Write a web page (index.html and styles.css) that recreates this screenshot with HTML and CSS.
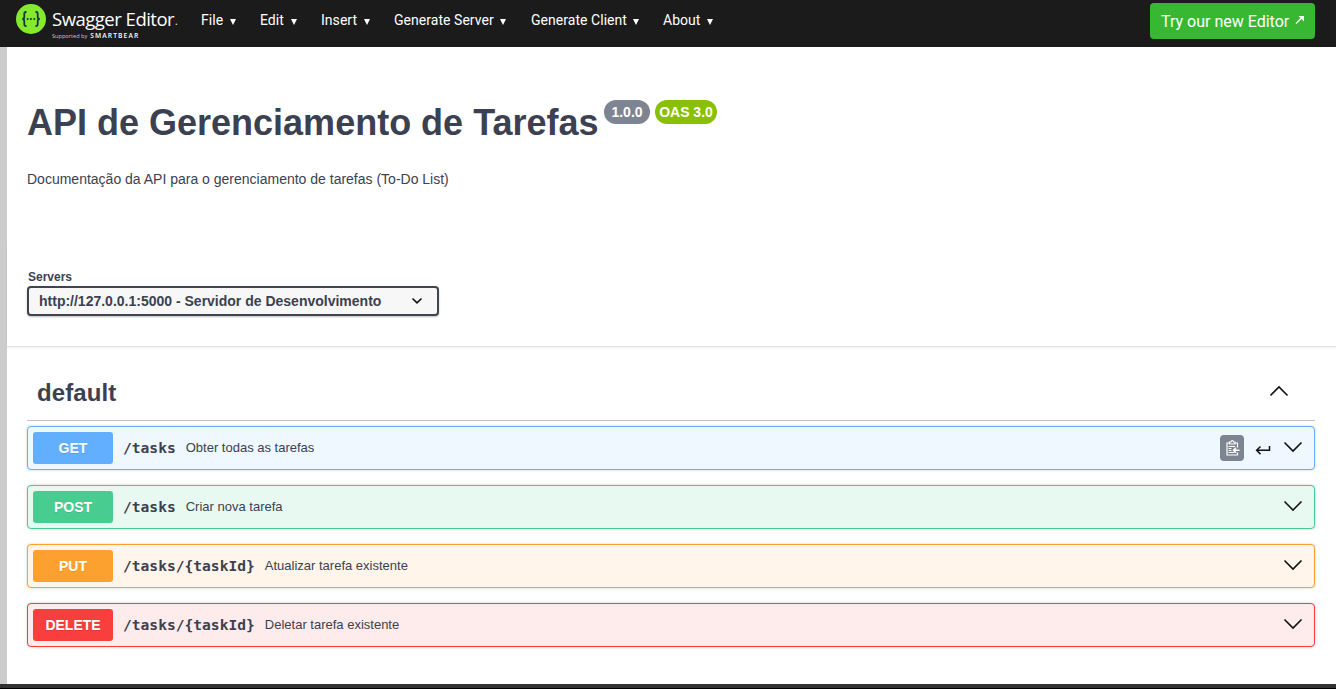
FILE: index.html
```
<!DOCTYPE html>
<html lang="pt">
<head>
<meta charset="utf-8">
<title>Swagger Editor</title>
<link rel="stylesheet" href="styles.css">
</head>
<body>
<header class="topbar">
  <div class="logo">
    <svg class="logo-mark" viewBox="0 0 30 30" width="30" height="30"><circle cx="15" cy="15" r="15" fill="#85ea2d"/><g fill="none" stroke="#173647" stroke-width="1.800"><path d="M10.500 8H9.800Q8.300 8 8.300 9.500v3.200Q8.300 15 6.200 15q2.100 0 2.100 2.300V20.500q0 1.500 1.500 1.500h.7M19.500 8h.7q1.500 0 1.500 1.500v3.200Q21.700 15 23.800 15q-2.100 0-2.100 2.300V20.500q0 1.500-1.500 1.500h-.7"/></g><g fill="#173647"><circle cx="11.700" cy="15" r="1.050"/><circle cx="15" cy="15" r="1.050"/><circle cx="18.300" cy="15" r="1.050"/></g></svg>
    <div class="logo-text">
      <div class="logo-name"><span class="name">Swagger Editor</span><span class="dot">.</span></div>
      <div class="logo-sub"><span class="by">Supported by</span><span class="bear">SMARTBEAR</span></div>
    </div>
  </div>
  <nav class="menu">
    <span class="item file">File<i class="caret"></i></span>
    <span class="item edit">Edit<i class="caret"></i></span>
    <span class="item insert">Insert<i class="caret"></i></span>
    <span class="item server">Generate Server<i class="caret"></i></span>
    <span class="item client">Generate Client<i class="caret"></i></span>
    <span class="item about">About<i class="caret"></i></span>
  </nav>
  <button class="try">Try our new Editor<svg width="10" height="10" viewBox="0 0 10 10" fill="none" stroke="#fff" stroke-width="1.500"><path d="M1 8.500 7 2.500"/><path d="M3.500 1H9v5.500z" fill="#fff" stroke="none"/></svg></button>
</header>
<main class="page">
  <section class="info">
    <div class="title-row"><h1>API de Gerenciamento de Tarefas</h1><span class="badge version">1.0.0</span><span class="badge oas">OAS 3.0</span></div>
    <p class="description">Documentação da API para o gerenciamento de tarefas (To-Do List)</p>
  </section>
  <section class="servers">
    <label class="servers-label">Servers</label>
    <div class="select"><span>http://127.0.0.1:5000 - Servidor de Desenvolvimento</span><svg width="12" height="8" viewBox="0 0 12 8" fill="none" stroke="#111" stroke-width="1.600"><path d="m1.500 1.500 4.500 4.300 4.500-4.300"/></svg></div>
  </section>
  <section class="operations">
    <div class="tag"><h2>default</h2><svg class="chevron" width="20" height="12" viewBox="0 0 20 12"><path d="m1.500 10.500 8.500-8.500 8.500 8.500"/></svg></div>
    <div class="op get"><span class="method">GET</span><span class="path">/tasks</span><span class="summary">Obter todas as tarefas</span>
      <span class="copy"><svg width="16" height="18" viewBox="0 0 16 18" fill="none" stroke="#fff"><path d="M13.500 13.500v2.500H3V4h2.500m6 0h2v4.500" stroke-width="1.200"/><path d="M5.500 5V3h1.500q.2-1.500 1.300-1.500T9.500 3H11v2z" stroke-width="1.200"/><path d="M4.500 7.500h6.500M4.500 9.500h3M4.500 11.500h3M4.500 13.500h6"/><path d="M15.500 11.200H10M12 8.700 9.500 11.200l2.500 2.500" stroke-width="1.500"/></svg></span>
      <svg class="return" width="16" height="12" viewBox="0 0 16 12" fill="none" stroke="#111" stroke-width="1.500"><path d="M14.500 2v4.300H2M5.500 2.500 1.600 6.300l3.900 3.800"/></svg>
      <svg class="chevron" width="20" height="12" viewBox="0 0 20 12"><path d="M1.500 1.500 10 10l8.500-8.500"/></svg></div>
    <div class="op post"><span class="method">POST</span><span class="path">/tasks</span><span class="summary">Criar nova tarefa</span><svg class="chevron" width="20" height="12" viewBox="0 0 20 12"><path d="M1.500 1.500 10 10l8.500-8.500"/></svg></div>
    <div class="op put"><span class="method">PUT</span><span class="path">/tasks/{taskId}</span><span class="summary">Atualizar tarefa existente</span><svg class="chevron" width="20" height="12" viewBox="0 0 20 12"><path d="M1.500 1.500 10 10l8.500-8.500"/></svg></div>
    <div class="op delete"><span class="method">DELETE</span><span class="path">/tasks/{taskId}</span><span class="summary">Deletar tarefa existente</span><svg class="chevron" width="20" height="12" viewBox="0 0 20 12"><path d="M1.500 1.500 10 10l8.500-8.500"/></svg></div>
  </section>
</main>
<footer class="bottom-edge"></footer>
</body>
</html>
```
FILE: styles.css
```
* { box-sizing: border-box; }
body {
  margin: 0;
  height: 689px;
  display: flex;
  flex-direction: column;
  overflow: hidden;
  background: #fff;
  color: #3b4151;
  font-family: "Liberation Sans", Arial, sans-serif;
}
.topbar {
  height: 47px;
  flex: none;
  display: flex;
  align-items: flex-start;
  padding: 3px 21px 0 16px;
  background: #1b1b1b;
  color: #fff;
  font-family: Roboto, sans-serif;
}
.logo { display: flex; width: 185px; gap: 6px; padding-top: 1px; }
.logo-mark { flex: none; }
.logo-text { font-family: "Open Sans", sans-serif; white-space: nowrap; }
.logo-name { height: 27px; line-height: 29px; font-size: 18.500px; letter-spacing: -0.500px; display: flex; }
.name { width: 123px; }
.dot { font-size: 10px; line-height: 34px; }
.logo-sub { display: flex; align-items: center; gap: 3px; height: 10px; line-height: 10px; }
.by { font-size: 5.600px; color: #ccc; }
.bear { font-size: 6.700px; font-weight: 600; letter-spacing: 1.100px; }
.menu { display: flex; font-size: 14px; letter-spacing: 0.040px; line-height: 34px; flex: 1; }
.item { display: flex; align-items: center; white-space: nowrap; flex: none; height: 34px; }
.caret {
  margin-left: auto;
  margin-top: 4px;
  border: 3px solid transparent;
  border-top: 6px solid #fff;
  border-bottom: 0;
}
.file { width: 35px; margin-right: 24px; }
.edit { width: 37px; margin-right: 24px; }
.insert { width: 49px; margin-right: 24px; }
.server { width: 112px; margin-right: 25px; }
.client { width: 108px; margin-right: 24px; }
.about { width: 50px; }
.try {
  width: 165px;
  height: 36px;
  padding: 0 10px 0 11px;
  display: flex;
  align-items: center;
  justify-content: space-between;
  border: 0;
  border-radius: 4px;
  background: #38b832;
  color: #fff;
  font: 16px Roboto, sans-serif;
  white-space: nowrap;
}
.try svg { margin-bottom: 3px; }
.page { flex: 1; border-left: 7px solid #ccc; }
.info { height: 193px; padding: 52px 20px 0; }
.title-row { display: flex; align-items: flex-start; }
h1 { margin: 0; width: 577px; padding-top: 1px; font-size: 36px; line-height: 45px; white-space: nowrap; }
.badge {
  height: 24px;
  margin-top: 1px;
  border-radius: 12px;
  color: #fff;
  font-size: 14px;
  font-weight: 700;
  line-height: 24px;
  text-align: center;
  white-space: nowrap;
}
.version { width: 46px; background: #7d8492; }
.oas { width: 62px; margin-left: 5px; background: #89bf04; }
.description { margin: 26px 0 0; font-size: 14px; line-height: 16px; }
.servers { height: 107px; padding: 29px 20px 0; border-bottom: 1px solid #e2e2e2; box-shadow: 0 1px 2px #0000000f; }
.servers-label { display: block; height: 17px; padding-left: 1px; font-size: 12px; font-weight: 700; line-height: 16px; }
.select {
  width: 412px;
  height: 30px;
  padding: 0 14px 0 10px;
  display: flex;
  align-items: center;
  justify-content: space-between;
  border: 2px solid #41444e;
  border-radius: 4px;
  background: #f7f7f7;
  box-shadow: 0 1px 2px #00000040;
  font-size: 14px;
  font-weight: 700;
  white-space: nowrap;
}
.operations { padding: 19px 21px 0 20px; }
.tag { height: 55px; padding: 0 26px 0 10px; margin-bottom: 5px; display: flex; align-items: center; justify-content: space-between; border-bottom: 1px solid #c2c4c8; }
.tag .chevron { margin-bottom: 4px; }
h2 { margin: 0; font-size: 24px; line-height: 30px; letter-spacing: 0.100px; }
.chevron { flex: none; fill: none; stroke: #111; stroke-width: 1.600; }
.op {
  height: 44px;
  margin-bottom: 15px;
  padding: 0 11px 0 5px;
  display: flex;
  align-items: center;
  border: 1px solid;
  border-radius: 4px;
  box-shadow: 0 0 3px #00000030;
}
.op > .chevron { margin-bottom: 2px; }
.method { width: 80px; height: 32px; margin-right: 10px; border-radius: 3px; color: #fff; font-size: 14px; font-weight: 700; line-height: 32px; text-align: center; text-shadow: 0 1px 0 #0000001a; }
.path { margin-right: 10px; padding-bottom: 1px; font: 700 14.600px "DejaVu Sans Mono", monospace; }
.summary { margin-right: auto; padding-bottom: 2px; font-size: 13px; }
.get { border-color: #61affe; background: #eff7ff; }
.get .method { background: #61affe; }
.post { border-color: #49cc90; background: #e8f9f1; }
.post .method { background: #49cc90; }
.put { border-color: #fca130; background: #fff5ea; }
.put .method { background: #fca130; }
.delete { border-color: #f93e3e; background: #feebeb; }
.delete .method { background: #f93e3e; }
.copy { width: 24px; height: 26px; margin-right: 11px; display: flex; align-items: center; justify-content: center; border-radius: 4px; background: #7d8492; }
.return { margin: 3px 12px 0 0; }
.bottom-edge { height: 5px; background: #333; border-bottom: 1px solid #000; }
```
